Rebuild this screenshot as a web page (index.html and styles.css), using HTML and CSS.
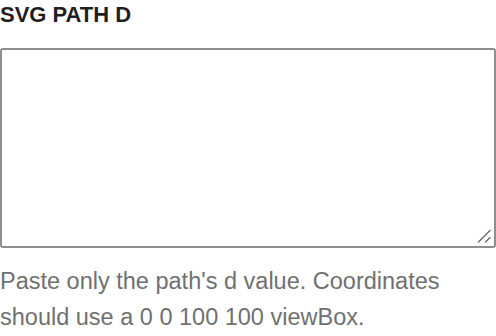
FILE: index.html
```html
<!DOCTYPE html>
<html lang="en">
<head>
    <meta charset="UTF-8">
    <meta name="viewport" content="width=device-width, initial-scale=1.0">
    <title>SVG path</title>
    <link rel="stylesheet" href="styles.css">
</head>
<body>
    <div class="field">
        <label class="field-label" for="pathD">SVG PATH D</label>
        <div class="input-wrap">
            <textarea class="field-input" id="pathD"></textarea>
            <svg class="grip" width="14" height="14" viewBox="0 0 14 14" aria-hidden="true">
                <path d="M1.5 13 L13 1.5 M8.5 13 L13 8.5" stroke="#6b6b6b" stroke-width="1.4" stroke-linecap="round" fill="none"/>
            </svg>
        </div>
        <p class="field-help">Paste only the path's d value. Coordinates should use a 0 0 100 100 viewBox.</p>
    </div>
</body>
</html>
```

FILE: styles.css
```css
body {
    font-family: 'Liberation Sans', Arial, sans-serif;
    margin: 0;
    padding: 0;
    background: #fff;
}

.field {
    display: flex;
    flex-direction: column;
}

.field-label {
    font-size: 22px;
    font-weight: bold;
    line-height: 29px;
    color: #1f1f1f;
    margin-bottom: 19px;
}

.input-wrap {
    position: relative;
    display: flex;
}

.field-input {
    box-sizing: border-box;
    width: 100%;
    height: 200px;
    margin: 0;
    padding: 6px 8px;
    border: 2px solid #8e8e8e;
    border-radius: 3px;
    background: #fff;
    font-family: inherit;
    font-size: 16px;
    resize: none;
}

.grip {
    position: absolute;
    right: 5px;
    bottom: 5px;
    pointer-events: none;
}

.field-help {
    margin: 15px 0 0;
    font-size: 23.5px;
    line-height: 36px;
    color: #707070;
}
```
